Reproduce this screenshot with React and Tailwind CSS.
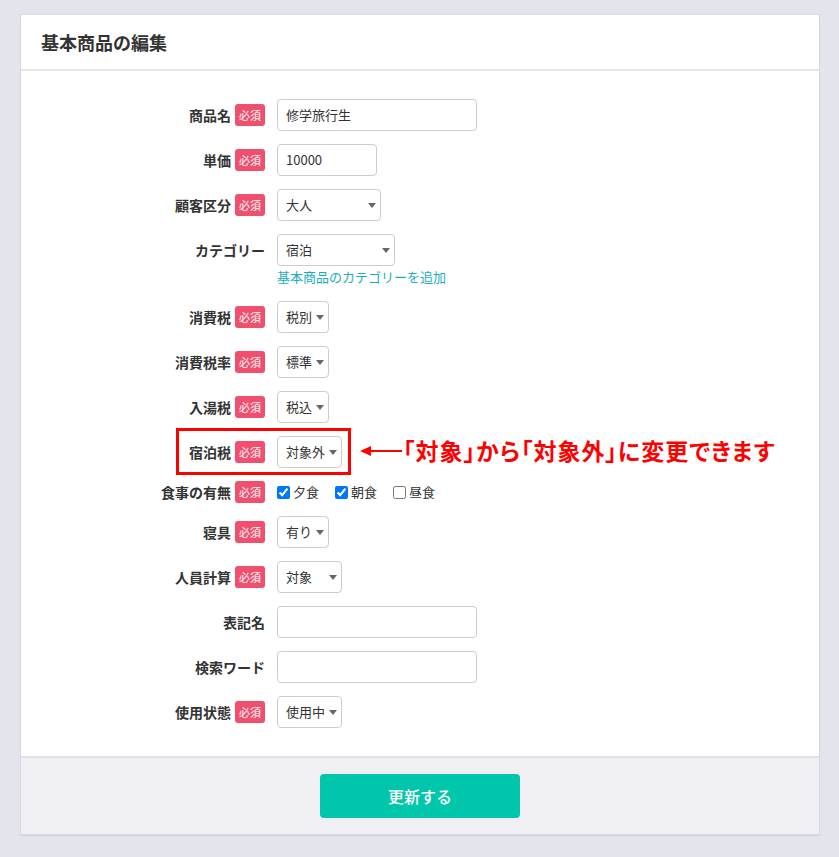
import React from "react";

const font = { fontFamily: '"Noto Sans CJK JP", "Noto Sans", sans-serif' };

function Badge() {
  return (
    <span className="ml-1 inline-flex h-[22px] w-[30px] items-center justify-center rounded-[3px] bg-[#f0506e] text-[11px] font-normal text-white">
      必須
    </span>
  );
}

function Label({ text, required }) {
  return (
    <div className="flex h-8 w-[244px] shrink-0 items-center justify-end">
      <span className="text-[14px] font-bold text-[#333]">{text}</span>
      {required && <Badge />}
    </div>
  );
}

function TextBox({ value, width }) {
  return (
    <div
      className={`flex h-8 items-center rounded-[4px] border border-[#ccc] bg-white pl-2 text-[13px] text-[#333] ${width}`}
    >
      {value}
    </div>
  );
}

function Select({ value, width }) {
  return (
    <div
      className={`flex h-8 items-center justify-between whitespace-nowrap rounded-[4px] border border-[#ccc] bg-white pl-2 pr-1 text-[13px] text-[#333] ${width}`}
    >
      <span>{value}</span>
      <svg width="8" height="5" viewBox="0 0 8 5" className="ml-1 shrink-0">
        <path d="M0 0h8L4 5z" fill="#666" />
      </svg>
    </div>
  );
}

function Row({ label, required, children }) {
  return (
    <div className="flex items-start gap-3">
      <Label text={label} required={required} />
      <div>{children}</div>
    </div>
  );
}

function Check({ label, checked }) {
  return (
    <label className="mr-4 flex items-center text-[13px] text-[#333]">
      <input
        type="checkbox"
        defaultChecked={checked}
        className="m-0 mr-[3px] h-[13px] w-[13px] accent-[#0075ff]"
      />
      {label}
    </label>
  );
}

export default function App() {
  return (
    <div className="min-h-[857px] bg-[#e4e4ed] px-5 pt-[14px] pb-[22px]" style={font}>
      <div className="w-[800px] overflow-hidden rounded-[3px] border border-[#d9d9df] bg-white shadow-[0_1px_1px_rgba(0,0,0,0.08)]">
        {/* Header */}
        <div className="flex h-[56px] items-center border-b-2 border-[#e6e6ea] px-5">
          <h1 className="text-[18px] font-bold text-[#333]">基本商品の編集</h1>
        </div>

        {/* Form */}
        <div className="flex flex-col gap-[13px] pt-[28px] pb-[28px]">
          <Row label="商品名" required>
            <TextBox value="修学旅行生" width="w-[200px]" />
          </Row>
          <Row label="単価" required>
            <TextBox value="10000" width="w-[100px]" />
          </Row>
          <Row label="顧客区分" required>
            <Select value="大人" width="w-[104px]" />
          </Row>
          <Row label="カテゴリー">
            <Select value="宿泊" width="w-[118px]" />
            <div className="flex h-[22px] items-center text-[13px] text-[#1aaeb8]">
              基本商品のカテゴリーを追加
            </div>
          </Row>
          <Row label="消費税" required>
            <Select value="税別" width="w-[52px]" />
          </Row>
          <Row label="消費税率" required>
            <Select value="標準" width="w-[52px]" />
          </Row>
          <Row label="入湯税" required>
            <Select value="税込" width="w-[52px]" />
          </Row>
          <div className="relative flex items-start gap-3">
            <Label text="宿泊税" required />
            <Select value="対象外" width="w-[65px]" />
            {/* annotation */}
            <div className="pointer-events-none absolute left-[155px] top-[-8px] h-[47px] w-[175px] border-[3px] border-[#f00]" />
            <div className="absolute left-[339px] top-[3px] flex items-center">
              <svg width="42" height="12" viewBox="0 0 42 12">
                <path d="M10 6h32" stroke="#f00" strokeWidth="2" />
                <path d="M0 6l11-5v10z" fill="#f00" />
              </svg>
              <span className="ml-[1px] whitespace-nowrap text-[23px] font-bold leading-none tracking-[1px] text-[#f00] [font-feature-settings:'palt']">
                「対象」から「対象外」に変更できます
              </span>
            </div>
          </div>
          <div className="flex items-center gap-3">
            <div className="flex h-[22px] w-[244px] shrink-0 items-center justify-end">
              <span className="text-[14px] font-bold text-[#333]">食事の有無</span>
              <Badge />
            </div>
            <div className="flex items-center">
              <Check label="夕食" checked />
              <Check label="朝食" checked />
              <Check label="昼食" />
            </div>
          </div>
          <Row label="寝具" required>
            <Select value="有り" width="w-[52px]" />
          </Row>
          <Row label="人員計算" required>
            <Select value="対象" width="w-[65px]" />
          </Row>
          <Row label="表記名">
            <TextBox value="" width="w-[200px]" />
          </Row>
          <Row label="検索ワード">
            <TextBox value="" width="w-[200px]" />
          </Row>
          <Row label="使用状態" required>
            <Select value="使用中" width="w-[65px]" />
          </Row>
        </div>

        {/* Footer */}
        <div className="flex justify-center border-t-2 border-[#e0e0e6] bg-[#efeff4] pt-4 pb-4">
          <button className="h-[44px] w-[200px] rounded-[4px] bg-[#00c7ab] text-[16px] font-medium text-white">
            更新する
          </button>
        </div>
      </div>
    </div>
  );
}
